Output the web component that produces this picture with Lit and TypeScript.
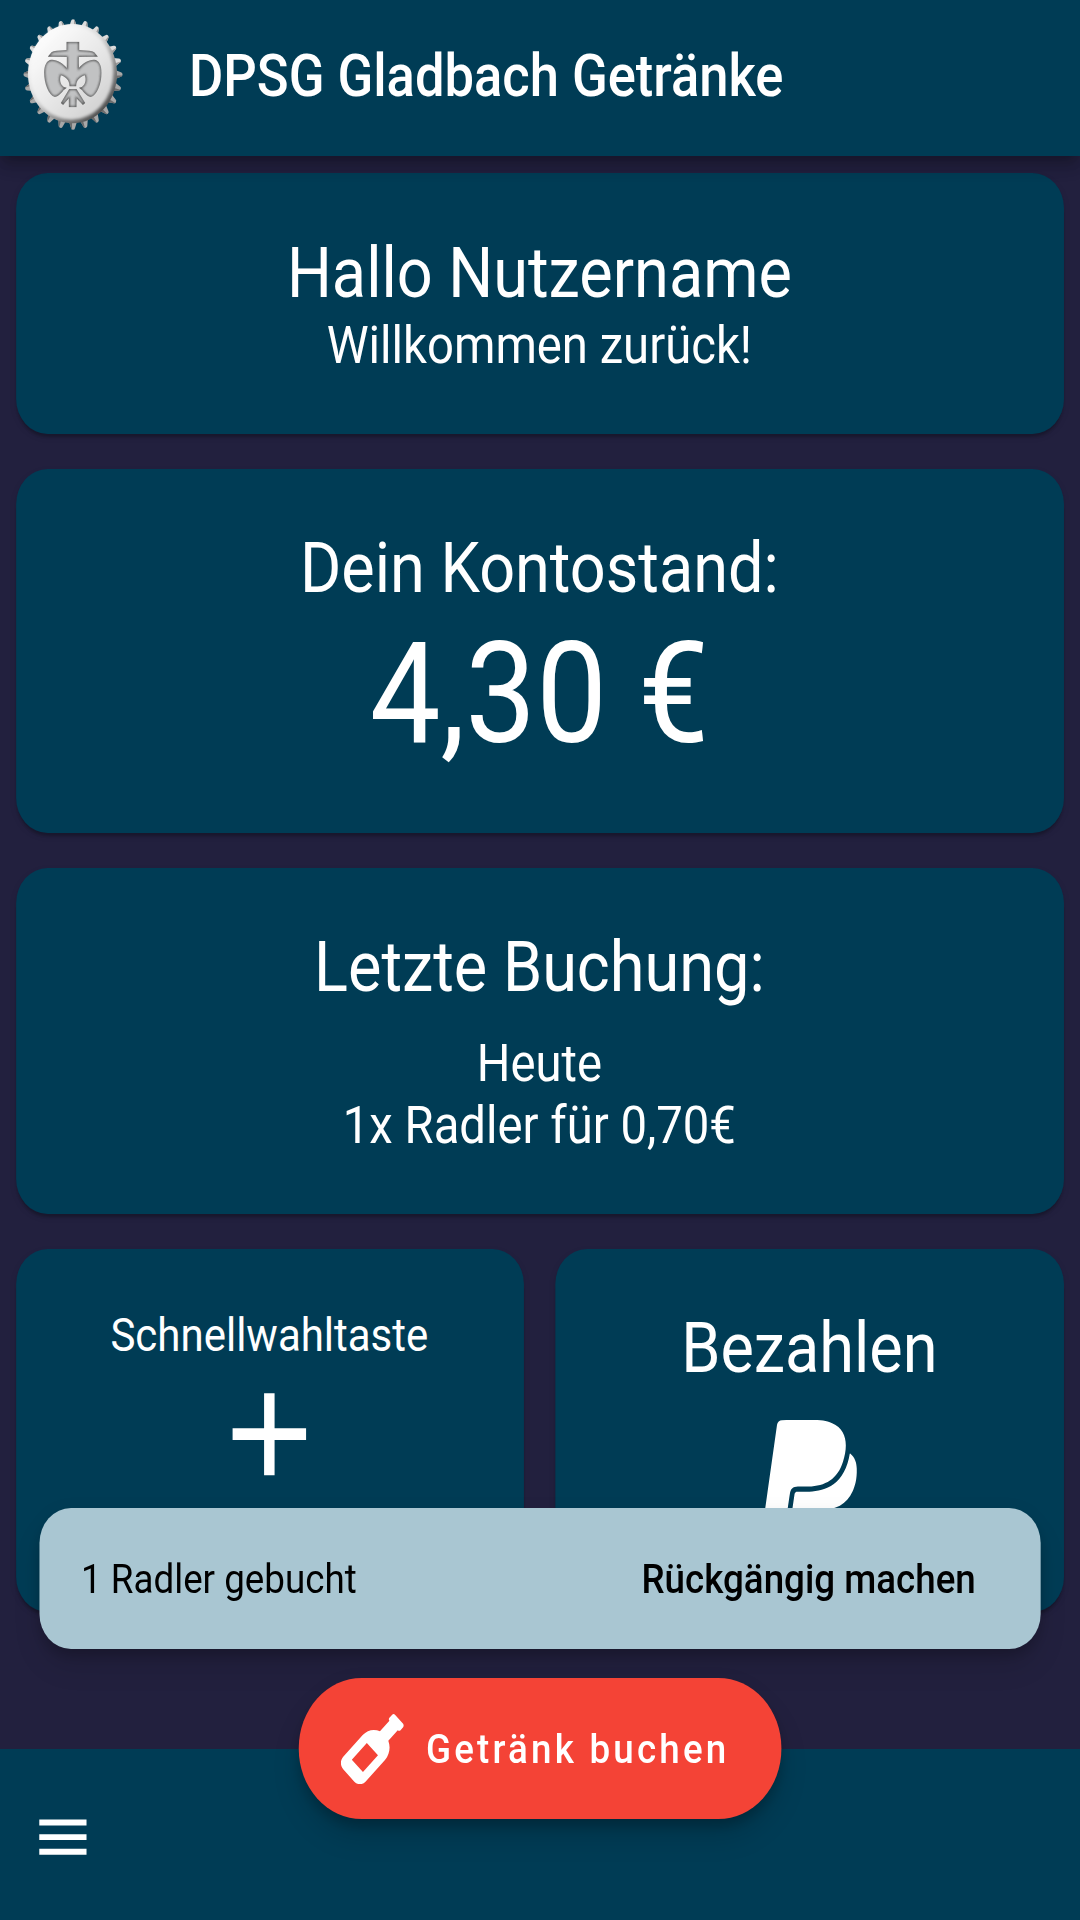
import { LitElement, html, css, svg } from "lit";
import { customElement } from "lit/decorators.js";

const TEETH = Array.from({ length: 24 }, (_, i) => i * 15);

/* Cross with the two lily wings, and the legs below the knot. */
const LILY =
  "M75 11H113V36L143 38Q153 39 158 43L169 56L112 57V90C122 76 142 64 158 65C172 66 180 82 180 104C180 136 166 172 148 177C138 176 128 166 122 157L112 149" +
  "L121 147C132 139 134 126 130 112C116 116 104 126 104 145H84C84 126 72 116 58 112C54 126 56 139 67 147L76 149L66 157C60 166 50 176 40 177C22 172 8 136 8 104C8 82 16 66 30 65C46 64 66 76 76 90V57L19 56L30 43Q35 39 45 38L75 36Z" +
  "M83 153H105L131 195L124 201L105 181V208H82V181L65 201L58 195Z";

@customElement("crown-cap")
class CrownCap extends LitElement {
  static styles = css`
    :host { display: block; }
    .cap { display: block; width: 100%; height: 100%; overflow: visible; }
  `;
  render() {
    return html`<svg class="cap" viewBox="0 0 297 333" preserveAspectRatio="none">
      <defs>
        <linearGradient id="face" x1="0.15" y1="0.1" x2="0.85" y2="0.9">
          <stop offset="0" stop-color="#fdfdfd" />
          <stop offset="0.5" stop-color="#e9e9e9" />
          <stop offset="1" stop-color="#d2d2d2" />
        </linearGradient>
        <linearGradient id="rim" x1="0.15" y1="0.1" x2="0.85" y2="0.9">
          <stop offset="0" stop-color="#ffffff" />
          <stop offset="0.45" stop-color="#d4d4d4" />
          <stop offset="0.8" stop-color="#777" />
          <stop offset="1" stop-color="#4a4a4a" />
        </linearGradient>
        <filter id="soft" x="-10%" y="-10%" width="120%" height="120%"><feGaussianBlur stdDeviation="5" /></filter>
        <filter id="inner" x="-10%" y="-10%" width="120%" height="120%"><feGaussianBlur stdDeviation="3" /></filter>
        <clipPath id="emblem"><path d=${LILY} /></clipPath>
      </defs>
      ${TEETH.map(
        (a) => svg`<g transform="translate(148.5 166.5) scale(1 1.12) rotate(${a})">
          <path d="M-12 -126L-6 -143Q-5 -148 0 -148Q5 -148 6 -143L12 -126Z" fill=${a > 75 && a < 285 ? "#a8a8a8" : "#dcdcdc"} />
          <path d="M3 -126L3 -147Q5 -147 6 -143L12 -126Z" fill=${a > 75 && a < 285 ? "#6c6c6c" : "#999"} />
        </g>`,
      )}
      <ellipse cx="147" cy="164" rx="133" ry="149" fill="url(#rim)" />
      <ellipse cx="144" cy="161" rx="125" ry="141" fill="url(#face)" filter="url(#soft)" />
      <g transform="translate(54 57)">
        <path d=${LILY} fill="#c1c2c3" />
        <g clip-path="url(#emblem)">
          <path d=${LILY} fill="none" stroke="#3c3c3c" stroke-width="5" filter="url(#inner)" />
        </g>
      </g>
    </svg>`;
  }
}

@customElement("app-root")
class AppRoot extends LitElement {
  static styles = css`
    :host {
      --dp: 2.926px;
      --teal: #003c55;
      --night: #22203e;
      display: block;
      width: 1080px;
      height: 1920px;
      overflow: hidden;
      font-family: Roboto, "Noto Sans", sans-serif;
      color: #fff;
    }
    .screen {
      position: relative;
      display: flex;
      flex-direction: column;
      width: 1203.84px;
      height: 1920px;
      background: var(--night);
      transform: scaleX(0.89713);
      transform-origin: 0 0;
      line-height: 1.172;
      white-space: nowrap;
    }
    .bar {
      position: relative;
      z-index: 1;
      display: flex;
      flex: none;
      align-items: center;
      height: 156px;
      box-sizing: border-box;
      padding: 0 0 7px 26.2px;
      background: var(--teal);
      box-shadow: 0 6px 12px -3px rgba(0,0,0,.2), 0 12px 15px rgba(0,0,0,.12), 0 3px 24px rgba(0,0,0,.08);
    }
    .logo { width: 110.8px; height: 111px; }
    .title { margin: 3px 0 0 73.8px; font-size: calc(20 * var(--dp)); font-weight: 500; }
    .list {
      display: flex;
      flex-direction: column;
      flex: none;
      gap: calc(12 * var(--dp));
      height: 1592.5px;
      box-sizing: border-box;
      padding: 17.4px calc(6 * var(--dp)) 0;
    }
    .card {
      display: flex;
      flex-direction: column;
      flex: none;
      align-items: center;
      box-sizing: border-box;
      padding: calc(20 * var(--dp)) calc(20 * var(--dp) + 1.4px) calc(20 * var(--dp)) calc(20 * var(--dp));
      border-radius: calc(12 * var(--dp));
      background: var(--teal);
      box-shadow: 0 6px 3px -3px rgba(0,0,0,.14), 0 3px 3px rgba(0,0,0,.1), 0 3px 9px rgba(0,0,0,.06);
    }
    .h { font-size: calc(24 * var(--dp)); margin-top: -0.4px; }
    .b { font-size: calc(18 * var(--dp)); padding-top: 1px; margin-bottom: -1px; }
    .s { font-size: calc(16 * var(--dp)); padding-top: 0.8px; }
    .amount { font-size: calc(48 * var(--dp)); padding-top: 2px; margin-bottom: -1.6px; }
    .gap { height: calc(8 * var(--dp)); }
    .row { display: grid; grid-template-columns: 1fr 1fr; gap: calc(12 * var(--dp)); height: 362.7px; }
    .big { display: block; height: calc(48 * var(--dp)); fill: #fff; }
    .plus { margin-top: 0.5px; }
    .pay { margin-top: -0.8px; }
    .bottom { display: flex; flex: 1; align-items: center; background: var(--teal); padding: 6px 0 0 calc(12 * var(--dp)); }
    .icon { display: block; width: calc(24 * var(--dp)); height: calc(24 * var(--dp)); fill: #fff; }
    .snack {
      position: absolute;
      z-index: 2;
      left: calc(15 * var(--dp));
      right: calc(15 * var(--dp));
      top: 1508.4px;
      height: calc(48 * var(--dp));
      display: flex;
      align-items: center;
      justify-content: space-between;
      box-sizing: border-box;
      padding: 0 calc(24.7 * var(--dp)) 0 calc(15.9 * var(--dp));
      border-radius: calc(12 * var(--dp));
      background: #a9c6d2;
      color: #000;
      font-size: calc(14 * var(--dp));
      box-shadow: 0 9px 15px -3px rgba(0,0,0,.17), 0 18px 29px rgba(0,0,0,.11), 0 3px 20px rgba(0,0,0,.06);
    }
    .action { font-weight: 500; }
    .fab {
      position: absolute;
      z-index: 3;
      left: 333.2px;
      top: 1678.3px;
      width: 537.8px;
      height: calc(48 * var(--dp));
      display: flex;
      align-items: center;
      gap: calc(8.4 * var(--dp));
      box-sizing: border-box;
      padding: 1.6px 0 0 calc(16 * var(--dp));
      border-radius: calc(24 * var(--dp));
      background: #f44336;
      font-size: calc(14 * var(--dp));
      font-weight: 500;
      letter-spacing: calc(1.22 * var(--dp));
      box-shadow: 0 9px 15px -3px rgba(0,0,0,.2), 0 18px 29px rgba(0,0,0,.14), 0 3px 20px rgba(0,0,0,.06);
    }
  `;

  render() {
    return html`<div class="screen">
      <header class="bar">
        <crown-cap class="logo"></crown-cap>
        <div class="title">DPSG Gladbach Getränke</div>
      </header>
      <main class="list">
        <section class="card">
          <div class="h">Hallo Nutzername</div>
          <div class="b">Willkommen zurück!</div>
        </section>
        <section class="card">
          <div class="h">Dein Kontostand:</div>
          <div class="amount">4,30 €</div>
        </section>
        <section class="card">
          <div class="h">Letzte Buchung:</div>
          <div class="gap"></div>
          <div class="b">Heute</div>
          <div class="b">1x Radler für 0,70€</div>
        </section>
        <div class="row">
          <section class="card">
            <div class="s">Schnellwahltaste</div>
            <svg class="big plus" viewBox="0 0 24 24"><path d="M19 13h-6v6h-2v-6H5v-2h6V5h2v6h6v2z" /></svg>
          </section>
          <section class="card">
            <div class="h">Bezahlen</div>
            <div class="gap"></div>
            <svg class="big pay" viewBox="0 0 384 512"><path d="M111.4 295.9c-3.5 19.2-17.4 108.7-21.5 134-.3 1.8-1 2.5-3 2.5H12.3c-7.6 0-13.1-6.6-12.1-13.9L58.8 46.6c1.5-9.6 10.1-16.9 20-16.9 152.3 0 165.1-3.7 204 11.4 60.1 23.3 65.6 79.5 44 140.3-21.5 62.6-72.5 89.5-140.1 90.3-43.4.7-69.5-7-75.3 24.2zM357.1 152c-1.8-1.3-2.5-1.8-3 1.3-2 11.4-5.1 22.5-8.8 33.6-39.9 113.8-150.5 103.9-204.5 103.9-6.1 0-10.1 3.3-10.9 9.4-22.6 140.4-27.1 169.7-27.1 169.7-1 7.1 3.5 12.9 10.6 12.9h63.5c8.6 0 15.7-6.3 17.4-14.9.7-5.4-1.1 6.1 14.4-91.3 4.6-22 14.3-19.7 29.3-19.7 71 0 126.4-28.8 142.9-112.3 6.5-34.8 4.6-71.4-23.8-92.6z" /></svg>
          </section>
        </div>
      </main>
      <nav class="bottom">
        <svg class="icon" viewBox="0 0 24 24"><path d="M3 18h18v-2H3v2zm0-5h18v-2H3v2zm0-7v2h18V6H3z" /></svg>
      </nav>
      <div class="snack"><span>1 Radler gebucht</span><span class="action">Rückgängig machen</span></div>
      <div class="fab">
        <svg class="icon" viewBox="0 0 512 512"><path d="M507.31 72.57L439.43 4.69c-6.25-6.25-16.38-6.25-22.63 0l-22.63 22.63c-6.25 6.25-6.25 16.38 0 22.63l-76.67 76.67c-46.58-19.7-102.4-10.73-140.37 27.23L18.75 312.23c-24.99 24.99-24.99 65.52 0 90.51l90.51 90.51c24.99 24.99 65.52 24.99 90.51 0l158.39-158.39c37.96-37.96 46.93-93.79 27.23-140.37l76.67-76.67c6.25 6.25 16.38 6.25 22.63 0l22.63-22.63c6.24-6.24 6.24-16.37-.01-22.62zM179.22 423.29l-90.51-90.51 122.04-122.04 90.51 90.51-122.04 122.04z" /></svg>
        <span>Getränk buchen</span>
      </div>
    </div>`;
  }
}
